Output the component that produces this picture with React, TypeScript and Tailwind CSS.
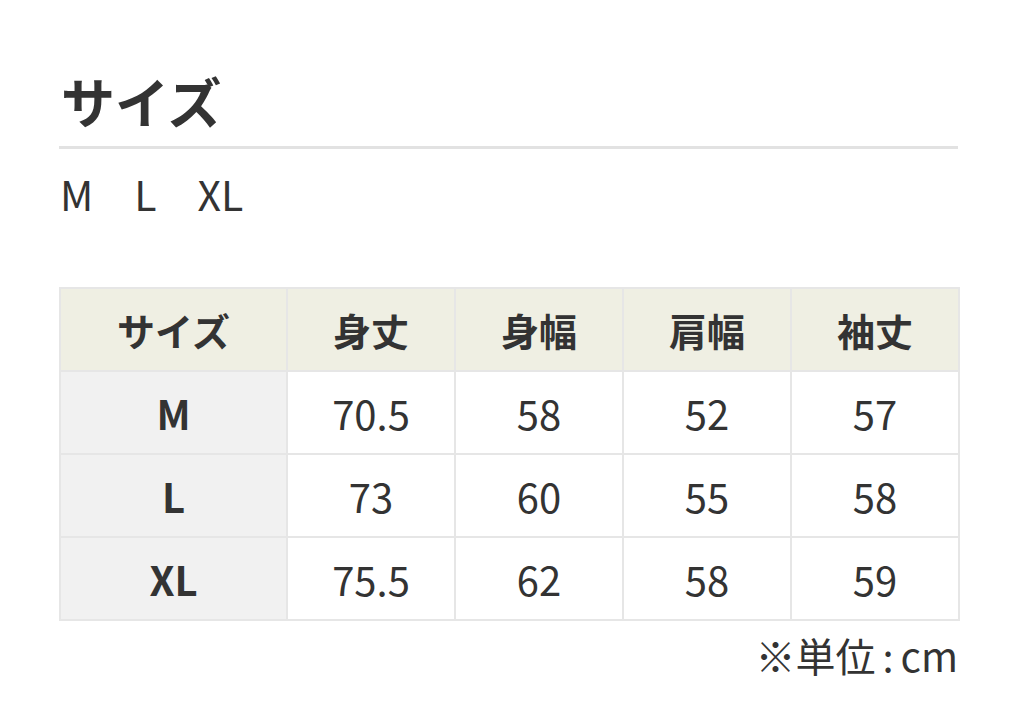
const COLS = ["身丈", "身幅", "肩幅", "袖丈"];

const ROWS = [
  { size: "M", values: ["70.5", "58", "52", "57"] },
  { size: "L", values: ["73", "60", "55", "58"] },
  { size: "XL", values: ["75.5", "62", "58", "59"] },
];

export default function App() {
  return (
    <div
      className="w-[1017px] h-[709px] bg-white px-[59px] text-[#333]"
      style={{ fontFamily: '"Noto Sans CJK JP", "Noto Sans", sans-serif' }}
    >
      <h2 className="pt-[74px] text-[54px] leading-[54px] font-bold pl-[2px]">サイズ</h2>
      <div className="mt-[18px] h-[3px] bg-[#e2e2e2]" />
      <p className="mt-[20px] pl-[1px] text-[41px] leading-[48px] font-normal">M　L　XL</p>

      <table className="mt-[70px] w-[899px] border-collapse table-fixed">
        <colgroup>
          <col className="w-[227px]" />
          <col className="w-[168px]" />
          <col className="w-[168px]" />
          <col className="w-[168px]" />
          <col className="w-[168px]" />
        </colgroup>
        <thead>
          <tr className="h-[83px] bg-[#efefe3]">
            <th className="border-2 border-[#e6e6e6] text-[38px] font-bold">サイズ</th>
            {COLS.map((c) => (
              <th key={c} className="border-2 border-[#e6e6e6] text-[38px] font-bold">
                {c}
              </th>
            ))}
          </tr>
        </thead>
        <tbody>
          {ROWS.map((r) => (
            <tr key={r.size} className="h-[83px]">
              <td className="border-2 border-[#e6e6e6] bg-[#f1f1f1] text-center text-[40px] font-bold">
                {r.size}
              </td>
              {r.values.map((v, i) => (
                <td key={i} className="border-2 border-[#e6e6e6] text-center text-[40px] font-normal">
                  {v}
                </td>
              ))}
            </tr>
          ))}
        </tbody>
      </table>

      <p className="mt-[10px] w-[899px] text-right text-[40px] leading-[48px] font-normal">
        ※単位<span className="mx-[7px]">:</span>cm
      </p>
    </div>
  );
}
